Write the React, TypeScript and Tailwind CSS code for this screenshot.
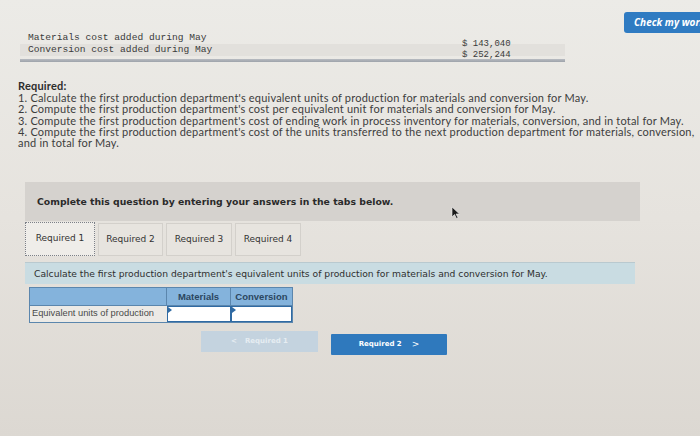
import React from "react";

const mono = { fontFamily: '"Liberation Mono", "DejaVu Sans Mono", monospace' };

function Cursor() {
  return (
    <svg className="absolute left-[451px] top-[206px]" width="9" height="13" viewBox="0 0 9 13">
      <path d="M1 1 L1 11 L3.5 8.5 L5.5 12.5 L7 11.8 L5 8 L8.5 8 Z" fill="#1b1b1b" stroke="#f4f4f4" strokeWidth="0.6" />
    </svg>
  );
}

export default function App() {
  const tabs = [
    { label: "Required 1", w: "w-[70px]", active: true },
    { label: "Required 2", w: "w-[65px]" },
    { label: "Required 3", w: "w-[66px]" },
    { label: "Required 4", w: "w-[66px]" },
  ];

  return (
    <div className="relative w-[700px] h-[436px] overflow-hidden bg-gradient-to-b from-[#ecebe7] via-[#e6e3de] to-[#dcd8d2] text-[#333]">
      {/* top: cost data + check my work */}
      <div className="flex items-start">
        <div className="ml-[20px] mt-[33px] w-[545px]">
          <div className="flex h-[11px] items-center text-[9.6px] text-[#3a3a3a]" style={mono}>
            <span className="pl-[8px] w-[442px]">Materials cost added during May</span>
            <span className="translate-y-[6px] text-[9px]">$ 143,040</span>
          </div>
          <div className="flex h-[12px] items-center bg-[#e2e0dc] text-[9.6px] text-[#3a3a3a]" style={mono}>
            <span className="pl-[8px] w-[442px]">Conversion cost added during May</span>
            <span className="translate-y-[6px] text-[9px]">$ 252,244</span>
          </div>
          <div className="mt-[3px] h-[3px] bg-gradient-to-b from-[#b7bbc1] to-[#9ea3aa]" />
        </div>
        <button className="ml-auto mt-[12px] -mr-[24px] h-[21px] w-[100px] rounded-[3px] bg-[#2f7bc2] pl-[10px] text-left text-[10px] font-bold italic text-white" style={{ fontFamily: '"Open Sans", sans-serif' }}>
          Check my work
        </button>
      </div>

      {/* required list */}
      <div className="ml-[18px] mt-[18px] whitespace-nowrap text-[11px] leading-[11.2px] tracking-[0.2px] text-[#3d3d3d]" style={{ fontFamily: 'Lato, "Open Sans", sans-serif' }}>
        <div className="font-bold text-[#2d2d2d]">Required:</div>
        <div className="mt-[1px]">1. Calculate the first production department's equivalent units of production for materials and conversion for May.</div>
        <div>2. Compute the first production department's cost per equivalent unit for materials and conversion for May.</div>
        <div>3. Compute the first production department's cost of ending work in process inventory for materials, conversion, and in total for May.</div>
        <div>
          4. Compute the first production department's cost of the units transferred to the next production department for materials, conversion,
          <br />
          and in total for May.
        </div>
      </div>

      {/* question panel */}
      <div className="ml-[25px] mt-[34px] w-[615px]" style={{ fontFamily: '"DejaVu Sans", Verdana, sans-serif' }}>
        <div className="flex h-[39px] items-center bg-[#d5d2ce] pl-[12px] text-[9.3px] font-bold text-[#2a2a2a]">
          Complete this question by entering your answers in the tabs below.
        </div>

        <div className="flex h-[35px] items-end gap-[3px]">
          {tabs.map((t) => (
            <div
              key={t.label}
              className={
                t.active
                  ? `${t.w} flex h-[34px] items-center justify-center border border-dotted border-[#7c8088] bg-[#efede9] text-[9px] text-[#333]`
                  : `${t.w} flex h-[33px] items-center justify-center border border-[#d3d0cb] bg-[#e7e4df] text-[9px] text-[#333]`
              }
            >
              {t.label}
            </div>
          ))}
        </div>

        <div className="mt-[6px] flex h-[22px] w-[610px] items-center border-t border-[#b9c9cf] bg-[#c9dce2] pl-[9px] text-[9.2px] text-[#2f2f2f]">
          Calculate the first production department's equivalent units of production for materials and conversion for May.
        </div>

        <div className="ml-[4px] mt-[3px] w-[264px] border border-[#5b86ad]" style={{ fontFamily: '"Liberation Sans", Arial, sans-serif' }}>
          <div className="flex h-[17px] bg-[#84b3dc] text-[9.5px] font-bold text-[#2b4660]">
            <div className="w-[137px] border-r border-[#5b86ad]" />
            <div className="flex w-[64px] items-center justify-center border-r border-[#5b86ad]">Materials</div>
            <div className="flex flex-1 items-center justify-center">Conversion</div>
          </div>
          <div className="flex h-[17px] border-t border-[#5b86ad] bg-[#eceae6] text-[9.3px] text-[#4a4a4a]">
            <div className="flex w-[137px] items-center pl-[2px]">Equivalent units of production</div>
            <div className="relative w-[64px] border-[1.5px] border-[#2f6aa3] bg-white">
              <div className="absolute left-0 top-0 h-0 w-0 border-l-[4px] border-t-[3px] border-b-[3px] border-l-[#2f6aa3] border-t-transparent border-b-transparent" />
            </div>
            <div className="relative flex-1 border-[1.5px] border-[#2f6aa3] bg-white">
              <div className="absolute left-0 top-0 h-0 w-0 border-l-[4px] border-t-[3px] border-b-[3px] border-l-[#2f6aa3] border-t-transparent border-b-transparent" />
            </div>
          </div>
        </div>

        <div className="mt-[8px] flex items-start">
          <button className="ml-[176px] flex h-[21px] w-[117px] items-center justify-center gap-[8px] bg-[#c4d3df] text-[7px] font-bold text-[#e6edf2]">
            <span>&lt;</span>
            <span>Required 1</span>
          </button>
          <button className="ml-[13px] mt-[3px] flex h-[21px] w-[116px] items-center justify-center gap-[10px] rounded-[1px] bg-[#2f79bd] text-[7px] font-bold text-white">
            <span>Required 2</span>
            <span className="text-[9px] font-normal">&gt;</span>
          </button>
        </div>
      </div>

      <Cursor />
    </div>
  );
}
